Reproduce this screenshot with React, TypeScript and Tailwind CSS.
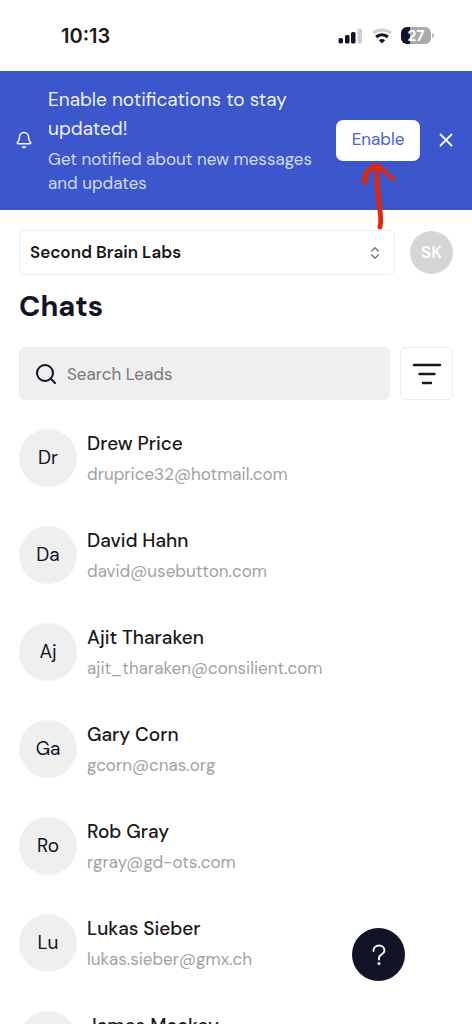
import React from "react";
import { Bell, Search, X, ChevronsUpDown } from "lucide-react";

type Lead = { initials: string; name: string; email: string };

const leads: Lead[] = [
  { initials: "Dr", name: "Drew Price", email: "druprice32@hotmail.com" },
  { initials: "Da", name: "David Hahn", email: "david@usebutton.com" },
  { initials: "Aj", name: "Ajit Tharaken", email: "ajit_tharaken@consilient.com" },
  { initials: "Ga", name: "Gary Corn", email: "gcorn@cnas.org" },
  { initials: "Ro", name: "Rob Gray", email: "rgray@gd-ots.com" },
  { initials: "Lu", name: "Lukas Sieber", email: "lukas.sieber@gmx.ch" },
  { initials: "", name: "James Mackey", email: "" },
];

function StatusBar() {
  return (
    <div className="flex h-[71px] shrink-0 items-center justify-between pr-[38px] pl-[61px]">
      <span className="font-[Inter,sans-serif] text-[20px] leading-6 font-semibold text-[#1a1a1a]">10:13</span>
      <div className="flex items-center gap-2">
        <svg width="25" height="16" viewBox="0 0 25 16" aria-hidden="true">
          <rect x="0.5" y="10" width="4.5" height="5.5" rx="1.8" fill="#101426" />
          <rect x="7" y="7" width="4.5" height="8.5" rx="1.5" fill="#101426" />
          <rect x="13" y="4" width="4.5" height="11.5" rx="1.5" fill="#101426" />
          <rect x="19.5" y="0.5" width="4.5" height="15" rx="1.5" fill="#cfcfcf" />
        </svg>
        <svg width="22" height="16" viewBox="0 0 22 16" aria-hidden="true" fill="none">
          <path d="M2 5.2C7 0.8 15 0.8 20 5.2" stroke="#cfcfcf" strokeWidth="3" />
          <path d="M5.2 9C8.4 6 13.6 6 16.8 9" stroke="#101426" strokeWidth="3.2" />
          <path d="M11 15.4L7.9 12.2Q11 9.8 14.1 12.2Z" fill="#101426" />
        </svg>
        <div className="flex items-center gap-px">
          <div className="flex h-[17px] w-[30px] items-center justify-center rounded-[6px] bg-linear-to-r from-[#101426] from-30% to-[#aaaaaa] to-30% font-[Inter,sans-serif] text-[14px] leading-4 font-bold text-white">
            27
          </div>
          <span className="h-[5px] w-[2px] rounded-r-full bg-[#bdbdbd]" />
        </div>
      </div>
    </div>
  );
}

function NotificationBanner() {
  return (
    <section className="relative flex shrink-0 items-center bg-[#3c56cc] pt-[14px] pb-[15px] pr-[15px] pl-[15px] text-white">
      <Bell className="size-[18px] shrink-0" strokeWidth={2} aria-hidden="true" />
      <div className="ml-[15px] min-w-0 flex-1">
        <h2 className="text-[19px] leading-[29px] font-normal text-[#eef0fb]">
          Enable notifications to stay updated!
        </h2>
        <p className="mt-1 text-[17px] leading-6 text-[#d3daf5]">
          Get notified about new messages and updates
        </p>
      </div>
      <button
        type="button"
        className="ml-2 h-[41px] w-[84px] shrink-0 rounded-[7px] bg-white text-[17px] text-[#4a60cf]"
      >
        Enable
      </button>
      <button type="button" aria-label="Dismiss" className="ml-[15px] shrink-0">
        <X className="size-[22px]" strokeWidth={2} />
      </button>
      <svg
        className="pointer-events-none absolute top-[89px] right-[73px] z-10"
        width="38"
        height="74"
        viewBox="0 0 38 74"
        fill="none"
        stroke="#e02706"
        strokeLinecap="round"
        strokeLinejoin="round"
        aria-hidden="true"
      >
        <path d="M16 6C16 29 17 39 19 51C20 58 20 63 19 67" strokeWidth="4.8" />
        <path d="M4 23C3 15 8 7 16 5C21 8 26 14 32 19" strokeWidth="4" />
        <path d="M4 22C3 15 7 10 11 8" strokeWidth="5" />
      </svg>
    </section>
  );
}

export default function App() {
  return (
    <div className="relative flex h-screen flex-col overflow-hidden bg-white font-['DM_Sans',Inter,sans-serif] text-[#181818]">
      <StatusBar />
      <NotificationBanner />

      <header className="shrink-0 px-[19px] pt-5">
        <div className="flex items-center gap-[15px]">
          <div className="relative min-w-0 flex-1">
            <select
              aria-label="Workspace"
              className="h-[45px] w-full appearance-none rounded-[6px] border border-[#ebebeb] bg-white px-[10px] text-[17px] font-semibold"
            >
              <option>Second Brain Labs</option>
            </select>
            <ChevronsUpDown
              className="pointer-events-none absolute inset-y-0 right-3 my-auto size-4 text-[#777777]"
              strokeWidth={2}
              aria-hidden="true"
            />
          </div>
          <button
            type="button"
            aria-label="Account SK"
            className="size-[43px] shrink-0 rounded-full bg-[#d4d5d7] text-[17px] font-semibold text-white"
          >
            SK
          </button>
        </div>

        <h1 className="mt-[13px] text-[29px] leading-9 font-bold text-[#101426]">Chats</h1>

        <div className="mt-[23px] flex gap-[10px]">
          <label className="flex h-[53px] min-w-0 flex-1 items-center gap-[9px] rounded-[6px] bg-[#efefef] pl-[15px]">
            <Search className="size-6 shrink-0 text-[#101426]" strokeWidth={2} aria-hidden="true" />
            <input
              type="search"
              aria-label="Search Leads"
              placeholder="Search Leads"
              className="w-full min-w-0 bg-transparent text-[17px] leading-6 outline-none placeholder:text-[#777777]"
            />
          </label>
          <button
            type="button"
            aria-label="Filter leads"
            className="flex size-[53px] shrink-0 items-center justify-center rounded-[5px] border border-[#ebebeb]"
          >
            <svg
              width="30"
              height="24"
              viewBox="0 0 30 24"
              stroke="#181818"
              strokeWidth="2.4"
              strokeLinecap="round"
              aria-hidden="true"
            >
              <path d="M2 3H28M7.500 12H22.500M11 21H19" />
            </svg>
          </button>
        </div>
      </header>

      <main className="min-h-0 flex-1 overflow-y-auto px-[19px] pt-[29px] [scrollbar-width:none]">
        <ul className="flex flex-col gap-[39px]">
          {leads.map((lead) => (
            <li key={lead.name}>
              <a href="#" className="flex items-center gap-[10px]">
                <span className="flex size-[58px] shrink-0 items-center justify-center rounded-full bg-[#efefef] text-[19px] text-[#101426]">
                  {lead.initials}
                </span>
                <span className="flex min-w-0 flex-col gap-1">
                  <span className="text-[19px] leading-7 font-medium">{lead.name}</span>
                  <span className="min-h-6 text-[17px] leading-6 text-[#a2a2a2]">{lead.email}</span>
                </span>
              </a>
            </li>
          ))}
        </ul>
      </main>

      <button
        type="button"
        aria-label="Help"
        className="absolute right-[67px] bottom-[43px] flex size-[53px] items-center justify-center rounded-full bg-[#101426]"
      >
        <svg width="14" height="22" viewBox="0 0 14 22" fill="none" aria-hidden="true">
          <path
            d="M1.500 7V6.500C1.500 3.500 4 1.500 7 1.500S12.500 3.500 12.500 6.500C12.500 10.500 7 10 7 14V15.500"
            stroke="#ffffff"
            strokeWidth="1.900"
            strokeLinecap="round"
          />
          <circle cx="7" cy="19.500" r="1.500" fill="#ffffff" />
        </svg>
      </button>
    </div>
  );
}
